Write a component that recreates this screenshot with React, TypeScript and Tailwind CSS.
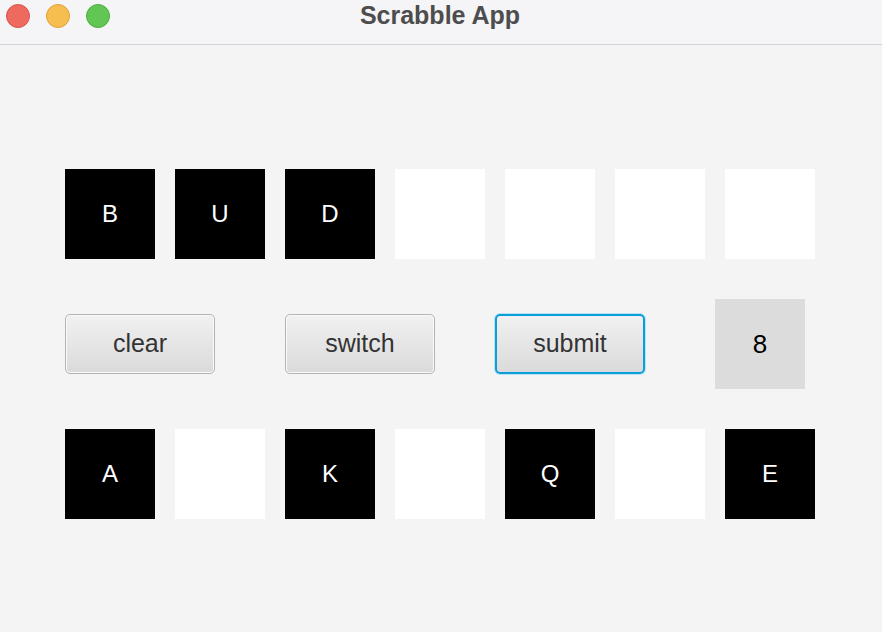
import React from 'react';

const topRow = ['B', 'U', 'D', '', '', '', ''];
const bottomRow = ['A', '', 'K', '', 'Q', '', 'E'];

const Tile: React.FC<{ letter: string }> = ({ letter }) => (
  <div
    className={`w-[90px] h-[90px] flex items-center justify-center text-[24px] text-white ${
      letter ? 'bg-black' : 'bg-white'
    }`}
  >
    {letter}
  </div>
);

const Btn: React.FC<{ label: string; focused?: boolean }> = ({ label, focused }) => (
  <button
    className={`w-[150px] h-[60px] rounded-[5px] bg-gradient-to-b from-[#f1f1f1] to-[#dadada] text-[25px] text-[#333] ${
      focused
        ? 'border-2 border-[#0a9fd8] shadow-[0_0_0_1px_#b9e3f5]'
        : 'border border-[#b3b3b3] shadow-[inset_0_0_0_1px_#fafafa]'
    }`}
  >
    {label}
  </button>
);

export default function App() {
  return (
    <div className="w-[882px] h-[632px] bg-[#f4f4f4] font-['Helvetica','Liberation_Sans',sans-serif] overflow-hidden">
      <div className="h-[45px] bg-[#f5f4f6] border-b border-[#d3d3d3] flex items-center relative">
        <div className="flex gap-[16px] pl-[6px] pb-[12px]">
          <span className="w-[24px] h-[24px] rounded-full bg-[#ee6a5f] border border-[#d9534a]" />
          <span className="w-[24px] h-[24px] rounded-full bg-[#f6be4f] border border-[#dea23a]" />
          <span className="w-[24px] h-[24px] rounded-full bg-[#62c655] border border-[#4fab43]" />
        </div>
        <div className="absolute left-0 right-0 top-[-3px] text-center text-[25px] font-bold text-[#4d4d4d] ml-[-2px]">
          Scrabble App
        </div>
      </div>

      <div className="pl-[65px] pt-[124px]">
        <div className="flex gap-[20px]">
          {topRow.map((l, i) => (
            <Tile key={i} letter={l} />
          ))}
        </div>

        <div className="flex items-center mt-[40px] h-[90px]">
          <Btn label="clear" />
          <div className="ml-[70px]">
            <Btn label="switch" />
          </div>
          <div className="ml-[60px]">
            <Btn label="submit" focused />
          </div>
          <div className="ml-[70px] w-[90px] h-[90px] bg-[#dcdcdc] flex items-center justify-center text-[26px] text-black">
            8
          </div>
        </div>

        <div className="flex gap-[20px] mt-[40px]">
          {bottomRow.map((l, i) => (
            <Tile key={i} letter={l} />
          ))}
        </div>
      </div>
    </div>
  );
}
